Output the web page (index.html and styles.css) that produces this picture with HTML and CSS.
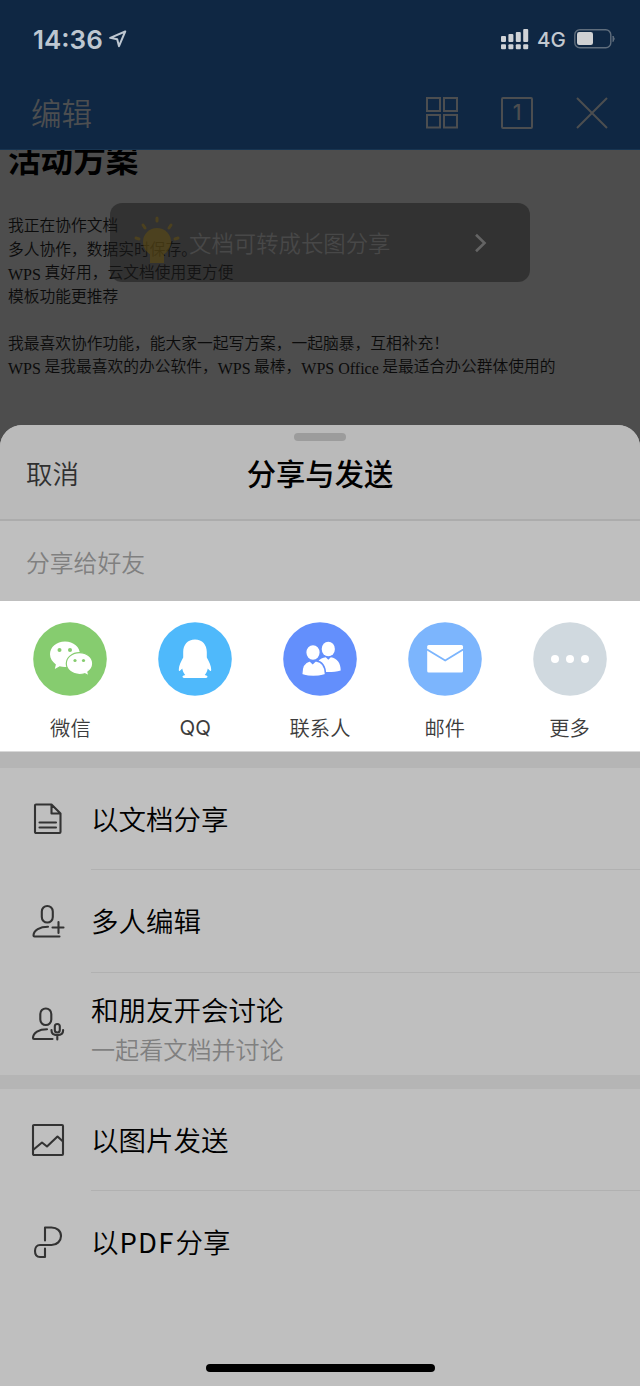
FILE: index.html
```html
<!DOCTYPE html>
<html lang="zh-CN">
<head>
<meta charset="utf-8">
<title>分享与发送</title>
<link rel="stylesheet" href="styles.css">
</head>
<body>
<div class="screen">
  <header class="top">
    <div class="status">
      <span class="clock">14:36</span>
      <svg class="locate" width="18" height="18" viewBox="0 0 18 18" fill="none" stroke="#bec7d1" stroke-width="2" stroke-linejoin="round"><path d="M16.2 1.5 1.2 7.8 8.2 9.3 10 16.2Z"/></svg>
      <svg class="signal" width="28" height="21" viewBox="0 0 28 21" fill="#cfd2d6"><rect x="0" y="7" width="5" height="6" rx="1"/><rect x="7.4" y="5" width="5" height="8" rx="1"/><rect x="14.8" y="3" width="5" height="10" rx="1"/><rect x="22.2" y="0" width="5" height="13" rx="1"/><rect x="0" y="15.3" width="5" height="5" rx="1"/><rect x="7.4" y="15.3" width="5" height="5" rx="1"/><rect x="14.8" y="15.3" width="5" height="5" rx="1"/><rect x="22.2" y="15.3" width="5" height="5" rx="1"/></svg>
      <span class="network">4G</span>
      <svg class="battery" width="42" height="20" viewBox="0 0 42 20"><rect x=".8" y=".8" width="36" height="18" rx="5" fill="none" stroke="#5f6d7c" stroke-width="1.4"/><rect x="3" y="3" width="16" height="13" rx="2.2" fill="#d0d1d3"/><path d="M39 7q2.5 2.8 0 5.6z" fill="#5f6d7c" stroke="#5f6d7c"/></svg>
    </div>
    <nav class="toolbar">
      <span class="edit">编辑</span>
      <svg width="34" height="34" viewBox="0 0 34 34" fill="none" stroke="#4c4e50" stroke-width="2"><rect x="2" y="2" width="13" height="13"/><rect x="19" y="2" width="13" height="13"/><rect x="2" y="19" width="13" height="12.5"/><rect x="19" y="19" width="13" height="12.5"/></svg>
      <span class="pages">1</span>
      <svg width="34" height="34" viewBox="0 0 34 34" fill="none" stroke="#4c4e50" stroke-width="2"><path d="M2 2 32 32M32 2 2 32"/></svg>
    </nav>
  </header>

  <main class="doc">
    <h1>活动方案</h1>
    <p>我正在协作文档</p>
    <p>多人协作，数据实时保存。</p>
    <p><i>WPS</i> 真好用，云文档使用更方便</p>
    <p>模板功能更推荐</p>
    <p class="spaced">我最喜欢协作功能，能大家一起写方案，一起脑暴，互相补充！</p>
    <p><i>WPS</i> 是我最喜欢的办公软件，<i>WPS</i> 最棒，<i>WPS Office</i> 是最适合办公群体使用的</p>
    <div class="toast">
      <svg class="sun" width="60" height="60" viewBox="0 0 60 60"><circle cx="30" cy="32" r="14" fill="#5e4c14"/><path d="M23 40h14v13H23z" fill="#5e4c14"/><path d="M30 8v3M16 15l2 3M44 15l-2 3M9 28l3 1M51 28l-3 1" stroke="#5e4c14" stroke-width="3" stroke-linecap="round"/></svg>
      <span>文档可转成长图分享</span>
      <svg class="chevron" width="14" height="20" viewBox="0 0 14 20" fill="none" stroke="#646464" stroke-width="2.6"><path d="M2 1.8 10.5 10 2 18.2"/></svg>
    </div>
  </main>

  <section class="sheet">
    <div class="sheet-head">
      <div class="handle"></div>
      <div class="sheet-row"><span class="cancel">取消</span><h2>分享与发送</h2></div>
    </div>
    <div class="friends">分享给好友</div>

    <div class="targets">
      <div class="target">
        <svg width="74" height="74" viewBox="0 0 74 74"><circle cx="37" cy="37" r="36.8" fill="#86cc6f"/><path d="M32 19.5c8.600 0 15 5.600 15 12.800S40.600 45 32 45c-1.900 0-3.700-.2-5.300-.7L21.800 47l1.100-4.600C19.400 40 17 36.500 17 32.300c0-7.200 6.500-12.800 15-12.800z" fill="#fff"/><path d="M46.500 30.600c7.400 0 13.200 4.900 13.200 11 0 3.500-1.800 6.500-4.800 8.500l1 3.700-4.200-2.100c-1.600.5-3.300.8-5.200.8-7.400 0-13.200-4.900-13.200-10.900s5.800-11 13.200-11z" fill="#fff" stroke="#86cc6f" stroke-width="1.200"/><g fill="#86cc6f"><circle cx="26.500" cy="28" r="2"/><circle cx="37" cy="28" r="2"/><circle cx="42" cy="38.500" r="1.600"/><circle cx="50.500" cy="38.500" r="1.600"/></g></svg>
        <span>微信</span>
      </div>
      <div class="target">
        <svg width="74" height="74" viewBox="0 0 74 74"><circle cx="37" cy="37" r="36.800" fill="#4fb9fb"/><path d="M37 17.500c7.400 0 11.800 5.300 11.800 12.500v5.500c2.400 4.300 4.400 8.600 4.400 12 0 2.200-.9 2.200-3.400-.9-.5 2.500-1.400 4.500-3 6.400 2.200.5 2.700 1 2.700 1.800 0 1-1 1.200-3 1.200h-19c-2 0-3-.2-3-1.200 0-.8.5-1.300 2.700-1.800-1.600-1.900-2.500-3.900-3-6.400-2.500 3.100-3.400 3.100-3.400.9 0-3.400 2-7.700 4.400-12V30c0-7.200 4.400-12.500 11.800-12.500z" fill="#fff"/></svg>
        <span class="qq">QQ</span>
      </div>
      <div class="target">
        <svg width="74" height="74" viewBox="0 0 74 74"><circle cx="37" cy="37" r="36.800" fill="#638ffc"/><g fill="#fff"><ellipse cx="45.300" cy="27" rx="6.600" ry="7.300"/><path d="M35 39.500c2-2.500 4.600-3.700 7.800-4.200l2.500 2.500 2.500-2.500c6.500 1 9.900 5.800 9.900 13.200-4.500 1.200-9.500 1.700-14.500 1.500z"/></g><g fill="#fff" stroke="#638ffc" stroke-width="1.400"><path d="M26.800 38.800l2.900 2.800 2.900-2.800c6.800.8 9.900 5.500 9.900 13.800-7.500 2.300-16.500 2.500-23.800 0 0-8 2.200-12.600 8.100-13.800z"/><ellipse cx="30" cy="30.500" rx="7.300" ry="8"/></g></svg>
        <span>联系人</span>
      </div>
      <div class="target">
        <svg width="74" height="74" viewBox="0 0 74 74"><circle cx="37" cy="37" r="36.800" fill="#7cb5fd"/><rect x="19.200" y="23" width="35.800" height="27.500" rx="1.500" fill="#fff"/><path d="M19 27.500 37.200 38.500 55.200 27.500" fill="none" stroke="#7cb5fd" stroke-width="1.900"/></svg>
        <span>邮件</span>
      </div>
      <div class="target">
        <svg width="74" height="74" viewBox="0 0 74 74"><circle cx="37" cy="37" r="36.800" fill="#d0d9df"/><g fill="#fff"><circle cx="22" cy="37" r="4"/><circle cx="37" cy="37" r="4"/><circle cx="52" cy="37" r="4"/></g></svg>
        <span>更多</span>
      </div>
    </div>

    <div class="group">
      <div class="item">
        <svg class="glyph" viewBox="0 0 34 34"><path d="M5 2.500H20.500L29.500 11.500V30a1 1 0 0 1-1 1H5a1 1 0 0 1-1-1V3.500a1 1 0 0 1 1-1M20.500 2.500V11.500H29.500M8.500 20.500H25M8.500 25.500H25"/></svg>
        <div class="text">以文档分享</div>
      </div>
      <div class="item">
        <svg class="glyph" viewBox="0 0 34 34"><rect x="10.800" y="2" width="11" height="16.500" rx="5.500"/><path d="M17 22.700c-8 0-14.500 3.300-14.500 8.800 0 .7.300 1 1 1H28.500M21.500 23.500H32.500M27.500 18V29"/></svg>
        <div class="text">多人编辑</div>
      </div>
      <div class="item">
        <svg class="glyph" viewBox="0 0 34 34"><rect x="9.300" y="1.500" width="11" height="16.500" rx="5.500"/><path d="M16 22.200c-8 0-14 3.300-14 8.800 0 .7.300 1 1 1H21.500"/><rect x="23.800" y="17" width="5" height="8.500" rx="2.500"/><path d="M20.500 23v.5c0 3 2.500 4.600 5.800 4.600s5.800-1.600 5.800-4.600V23M26.300 28V32.500"/></svg>
        <div class="text double">和朋友开会讨论<small>一起看文档并讨论</small></div>
      </div>
    </div>
    <div class="group last">
      <div class="item">
        <svg class="glyph" viewBox="0 0 34 34"><rect x="2" y="2" width="30" height="30" rx="1"/><path d="M2 27 11 19.500 16 23.500 26.500 13.500 32 18.500"/></svg>
        <div class="text">以图片发送</div>
      </div>
      <div class="item">
        <svg class="glyph" viewBox="0 0 34 34"><path d="M14 15.500V2.500H20.500C26 2.500 30 6 30 11S26 20 20.500 20H9C6 20 4 22.300 4 26s2 6 5 6h5V23.500"/></svg>
        <div class="text"><span>以<b>PDF</b>分享</span></div>
      </div>
    </div>
    <div class="home"></div>
  </section>
</div>
</body>
</html>
```
FILE: styles.css
```css
* { box-sizing: border-box; }
body { margin: 0; background: #4d4d4d; font-family: "Noto Sans CJK SC", sans-serif; }
svg { display: block; flex: none; }
.screen { width: 640px; height: 1386px; display: flex; flex-direction: column; overflow: hidden; }

.top { height: 150px; flex: none; background: #0f2743; border-bottom: 1px solid #173451; }
.status { height: 78px; padding: 0 24px 0 33px; display: flex; align-items: center; font-family: Inter, sans-serif; color: #bec7d1; }
.clock { font-size: 26px; font-weight: 600; width: 76px; }
.signal { margin-left: auto; }
.network { font-size: 20.500px; font-weight: 450; width: 37px; margin-left: 8px; padding-top: 1px; color: #c3c9d0; }
.toolbar { height: 70px; padding: 0 31px; display: flex; align-items: center; gap: 42px; color: #4c4e50; }
.edit { font-size: 30.500px; line-height: 44px; padding-bottom: 2px; font-weight: 350; margin-right: auto; }
.pages { width: 32px; height: 32px; border: 2px solid #4c4e50; border-radius: 2px; font: 500 21px/28px Inter, sans-serif; text-align: center; }

.doc { position: relative; height: 275px; flex: none; padding-left: 8px; overflow: hidden; color: #0b0b0b; }
.doc h1 { margin: -14px 0 34px; font-size: 32.600px; line-height: 43px; font-weight: 700; color: #000; }
.doc p { margin: 0; height: 23.500px; font-size: 15.750px; line-height: 23.500px; font-weight: 350; white-space: nowrap; }
.doc p.spaced { margin-top: 23.500px; }
.doc i { font: 16px "Liberation Serif", serif; position: relative; top: 2px; }
.toast { position: absolute; left: 110px; top: 53px; width: 420px; height: 79px; border-radius: 12px; background: rgba(26, 26, 26, .52); display: flex; align-items: center; padding: 0 42px 2px 17px; font-size: 22.400px; font-weight: 350; color: #484848; }
.toast span { margin-left: 2px; }
.sun { opacity: .6; position: relative; top: -2px; }
.chevron { margin-left: auto; position: relative; top: 1px; }

.sheet { flex: 1; background: #bfbfbf; border-radius: 22px 22px 0 0; overflow: hidden; display: flex; flex-direction: column; }
.sheet-head { height: 96px; background: #bababa; border-bottom: 2px solid #acacac; padding-top: 8px; }
.handle { width: 52px; height: 8px; border-radius: 4px; background: #9c9c9c; margin: 0 auto; }
.sheet-row { display: grid; grid-template-columns: 1fr auto 1fr; align-items: center; padding: 0 26px; height: 62px; }
.cancel { font-size: 26.500px; font-weight: 350; color: #303030; }
.sheet h2 { margin: 0; font-size: 29.300px; font-weight: 500; color: #000; }
.friends { height: 80px; line-height: 81px; padding-left: 26px; font-size: 23.800px; font-weight: 350; color: #808080; }
.targets { height: 151px; background: #fff; display: flex; justify-content: space-between; padding: 21px 8px 0; border-bottom: 1px solid #d8d8d8; }
.target { width: 125px; display: flex; flex-direction: column; align-items: center; gap: 16px; font-size: 20.300px; line-height: 30px; font-weight: 350; color: #3c3c3c; }
.qq { font: 20.500px/32px Inter, sans-serif; }
.group { border-top: 16px solid #b5b5b5; }
.last { border-top-width: 14px; }
.item { height: 102.300px; display: flex; align-items: center; padding-left: 31px; gap: 27px; }
.last .item { height: 102px; }
.glyph { width: 34px; height: 34px; margin-right: -1px; fill: none; stroke: #333; stroke-width: 2.100; stroke-linejoin: round; stroke-linecap: round; }
.text { flex: 1; height: 100%; padding-bottom: 1px; border-bottom: 1px solid #b1b1b1; display: flex; flex-direction: column; justify-content: center; font-size: 27.500px; line-height: 40px; font-weight: 350; color: #000; }
.text.double { padding: 11px 0 0; }
.item:last-child .text { border-bottom: 0; }
.text b { font: 400 27.500px/40px "Noto Sans CJK SC", sans-serif; letter-spacing: 1.200px; margin: 0 1px; }
.text small { font-size: 24.100px; font-weight: 350; color: #808080; }
.home { width: 229px; height: 8px; margin: 71px auto 0; border-radius: 4px; background: #000; }
```
